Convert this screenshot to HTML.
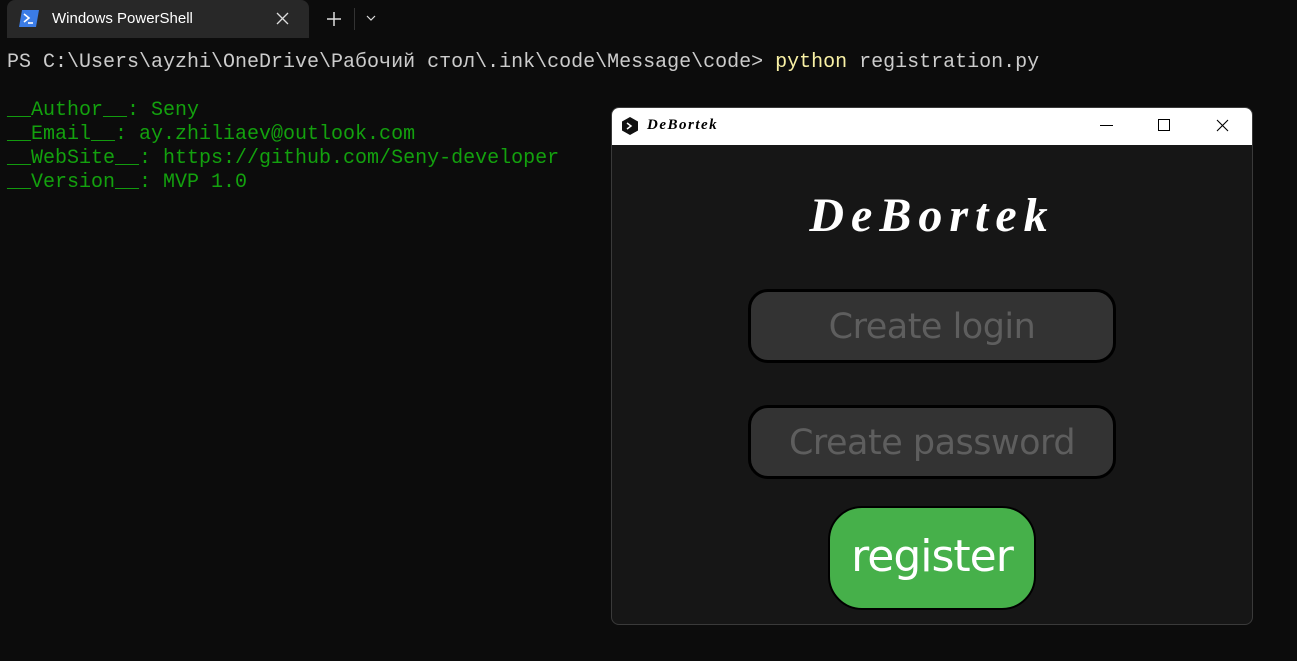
<!DOCTYPE html>
<html><head><meta charset="utf-8"><style>
body{margin:0;width:1297px;height:661px;background:#0c0c0c;overflow:hidden;position:relative;font-family:"Liberation Sans",sans-serif}
.tabbar{position:absolute;left:0;top:0;width:1297px;height:38px;background:#0c0c0c}
.tab{position:absolute;left:7px;top:0;width:302px;height:38px;background:#282828;border-radius:8px 8px 0 0}
.term{position:absolute;left:7px;top:50px;font-family:"Liberation Mono",monospace;font-size:20px;line-height:24px;color:#cccccc;white-space:pre}
.g{color:#13a10e}.y{color:#f9f1a5}
.win{position:absolute;left:611px;top:107px;width:640px;height:516px;background:#161616;border:1px solid #3a3a3a;border-radius:8px;overflow:hidden}
.tb{height:37px;background:#fff;position:relative}
.field{position:absolute;left:136px;width:362px;height:68px;background:#333;border:3px solid #000;border-radius:20px;color:#5e5e5e;font-family:"DejaVu Sans",sans-serif;font-size:35px;letter-spacing:-0.5px;text-align:center;line-height:70px}
</style></head><body>
<div class="tabbar"><div class="tab">
<svg style="position:absolute;left:12px;top:10px" width="20" height="17"><polygon points="3,0 20,0 17,17 0,17" fill="#3b7ce6"/><path d="M5 4 L10 8 L5 12" stroke="#fff" stroke-width="1.6" fill="none"/><path d="M9 13 H14" stroke="#fff" stroke-width="1.6"/></svg>
<span style="position:absolute;left:45px;top:10px;color:#fff;font-size:15px">Windows PowerShell</span>
<svg style="position:absolute;left:269px;top:12px" width="13" height="13"><path d="M1 1L12 12M12 1L1 12" stroke="#ddd" stroke-width="1.3"/></svg>
</div>
<svg style="position:absolute;left:326px;top:11px" width="16" height="16"><path d="M8 1V15M1 8H15" stroke="#ddd" stroke-width="1.5"/></svg>
<div style="position:absolute;left:354px;top:8px;width:1px;height:22px;background:#333"></div>
<svg style="position:absolute;left:366px;top:15px" width="10" height="7"><path d="M1 1L5 5L9 1" stroke="#ddd" stroke-width="1.2" fill="none"/></svg>
</div>
<div class="term" style="top:51px">PS C:\Users\ayzhi\OneDrive\Рабочий стол\.ink\code\Message\code&gt; <span class="y">python</span> registration.py

<span class="g">__Author__: Seny
__Email__: ay.zhiliaev@outlook.com
__WebSite__: https://github.com/Seny-developer
__Version__: MVP 1.0</span></div>
<div class="win">
<div class="tb">
<svg style="position:absolute;left:10px;top:9px" width="16" height="18"><polygon points="8,0 16,4.5 16,13.5 8,18 0,13.5 0,4.5" fill="#111"/><path d="M5 6 L9 9 L5 12" stroke="#fff" stroke-width="1.5" fill="none"/></svg>
<span style="position:absolute;left:35px;top:9px;font-family:'Liberation Serif',serif;font-style:italic;font-weight:bold;font-size:15px;letter-spacing:1.5px">DeBortek</span>
<div style="position:absolute;left:488px;top:17px;width:13px;height:1px;background:#000"></div>
<div style="position:absolute;left:546px;top:11px;width:10px;height:10px;border:1px solid #000"></div>
<svg style="position:absolute;left:604px;top:11px" width="13" height="13"><path d="M1 1L12 12M12 1L1 12" stroke="#000" stroke-width="1.1"/></svg>
</div>
<div style="position:absolute;left:0;width:640px;top:80px;text-align:center;color:#fff;font-family:'Liberation Serif',serif;font-style:italic;font-weight:bold;font-size:48px;letter-spacing:7px">DeBortek</div>
<div class="field" style="top:181px">Create login</div>
<div class="field" style="top:297px">Create password</div>
<div style="position:absolute;left:216px;top:398px;width:204px;height:100px;background:#46b04a;border:2px solid #000;border-radius:34px;color:#fff;font-family:'DejaVu Sans',sans-serif;font-size:44px;letter-spacing:-1px;text-align:center;line-height:98px">register</div>
</div>
</body></html>
